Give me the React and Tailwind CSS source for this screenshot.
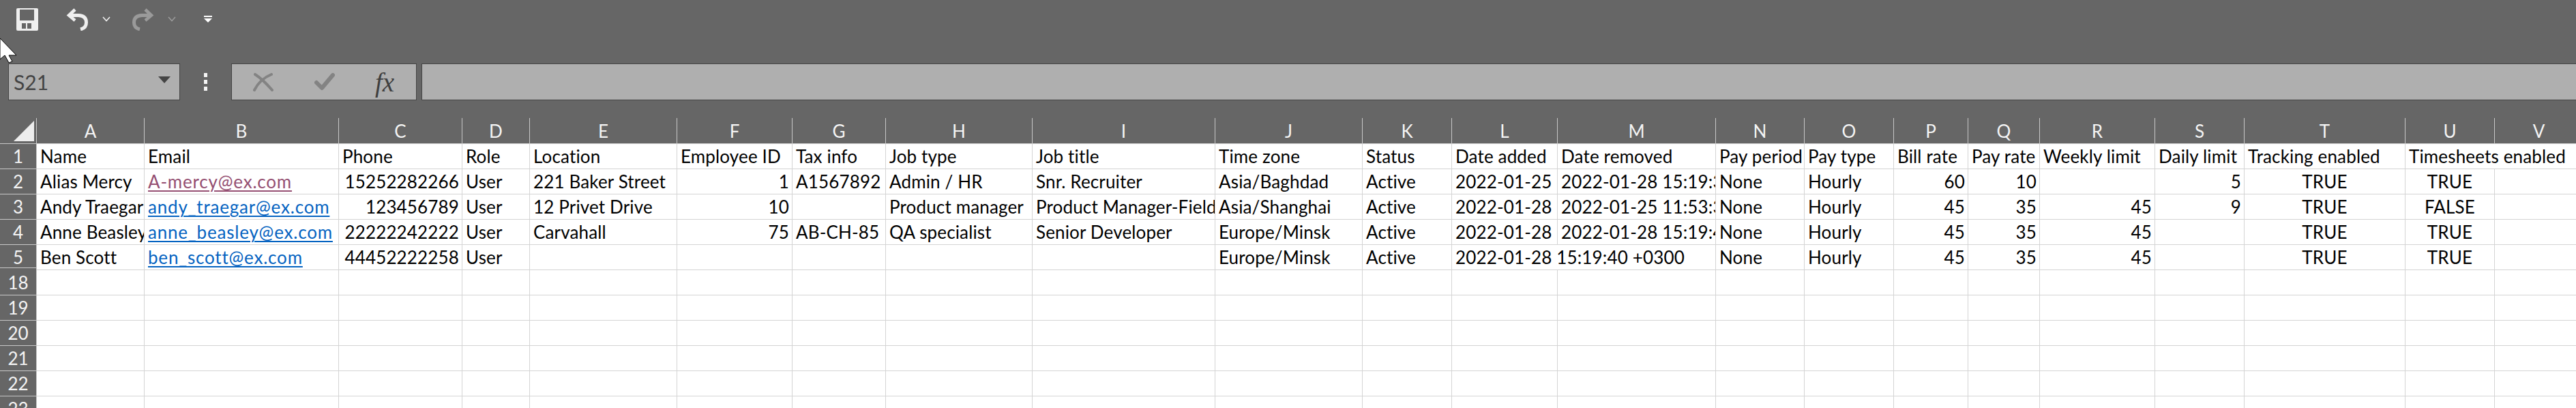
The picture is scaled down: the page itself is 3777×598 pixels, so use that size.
const GRID = "grid grid-cols-[54px_158px_285px_181px_99px_216px_169px_137px_215px_268px_216px_131px_155px_232px_130px_131px_109px_105px_169px_131px_236px_131px_130px]";

const COLUMNS = "ABCDEFGHIJKLMNOPQRSTUV".split("");
const RIGHT = ["C", "F", "P", "Q", "R", "S"];
const CENTER = ["T", "U"];

// "" is an empty cell, null is a cell covered by the text of its left neighbour
const ROWS = [
  { id: 1, cells: ["Name", "Email", "Phone", "Role", "Location", "Employee ID", "Tax info", "Job type", "Job title", "Time zone", "Status", "Date added", "Date removed", "Pay period", "Pay type", "Bill rate", "Pay rate", "Weekly limit", "Daily limit", "Tracking enabled", "Timesheets enabled", null] },
  { id: 2, cells: ["Alias Mercy", "A-mercy@ex.com", "15252282266", "User", "221 Baker Street", "1", "A1567892", "Admin / HR", "Snr. Recruiter", "Asia/Baghdad", "Active", "2022-01-25 11:53:36 +0300", "2022-01-28 15:19:36 +0300", "None", "Hourly", "60", "10", "", "5", "TRUE", "TRUE", ""] },
  { id: 3, cells: ["Andy Traegar", "andy_traegar@ex.com", "123456789", "User", "12 Privet Drive", "10", "", "Product manager", "Product Manager-Field", "Asia/Shanghai", "Active", "2022-01-28 15:19:38 +0300", "2022-01-25 11:53:36 +0300", "None", "Hourly", "45", "35", "45", "9", "TRUE", "FALSE", ""] },
  { id: 4, cells: ["Anne Beasley", "anne_beasley@ex.com", "22222242222", "User", "Carvahall", "75", "AB-CH-85", "QA specialist", "Senior Developer", "Europe/Minsk", "Active", "2022-01-28 15:19:39 +0300", "2022-01-28 15:19:40 +0300", "None", "Hourly", "45", "35", "45", "", "TRUE", "TRUE", ""] },
  { id: 5, cells: ["Ben Scott", "ben_scott@ex.com", "44452222258", "User", "", "", "", "", "", "Europe/Minsk", "Active", "2022-01-28 15:19:40 +0300", null, "None", "Hourly", "45", "35", "45", "", "TRUE", "TRUE", ""] },
];
const EMPTY_ROWS = [18, 19, 20, 21, 22, 23];

function SaveIcon() {
  return (
    <svg width="32" height="33" viewBox="0 0 32 33">
      <path fillRule="evenodd" fill="#efefef" d="M2 0H30Q32 0 32 2V31Q32 33 30 33H2Q0 33 0 31V2Q0 0 2 0ZM5 2V18H26V2ZM8 22V30H22V22Z" />
      <rect x="14" y="22" width="2" height="8" fill="#efefef" />
    </svg>
  );
}

function ArrowIcon({ color, flip }) {
  return (
    <svg width="33" height="33" viewBox="0 0 33 33" className={flip ? "-scale-x-100" : ""}>
      <path d="M13 2L4 10.5L13 18" fill="none" stroke={color} strokeWidth="4.5" />
      <path d="M5 10.5H18Q29.5 11 29.5 21Q29.5 29 21 31" fill="none" stroke={color} strokeWidth="5" />
    </svg>
  );
}

function Chevron({ color }) {
  return (
    <svg width="12" height="8" viewBox="0 0 12 8">
      <path d="M1 1L6 6.5L11 1" fill="none" stroke={color} strokeWidth="1.6" />
    </svg>
  );
}

function Toolbar() {
  return (
    <div className="flex h-[93px] items-start pl-[24px] pt-[12px]">
      <SaveIcon />
      <div className="ml-[41px]"><ArrowIcon color="#efefef" /></div>
      <div className="ml-[20px] mt-[12px]"><Chevron color="#efefef" /></div>
      <div className="ml-[31px]"><ArrowIcon color="#9a9a9a" flip /></div>
      <div className="ml-[20px] mt-[12px]"><Chevron color="#9a9a9a" /></div>
      <div className="ml-[41px] mt-[11px]">
        <svg width="12" height="10" viewBox="0 0 12 10">
          <rect x="0" y="0" width="12" height="2" fill="#fff" />
          <path d="M0 4H12L6 10Z" fill="#fff" />
        </svg>
      </div>
    </div>
  );
}

function FormulaBar() {
  return (
    <div className="flex h-[54px] pl-[12px]">
      <div className="flex w-[252px] items-center justify-between border border-[#444444] bg-[#afafaf] pl-[7px] pr-[13px]">
        <span className="text-[30px] leading-none text-[#444444]">S21</span>
        <svg width="18" height="10" viewBox="0 0 18 10" className="mb-[6px]">
          <path d="M0 0H18L9 10Z" fill="#444444" />
        </svg>
      </div>
      <div className="flex w-[75px] flex-col items-center justify-center gap-[4px] pr-[1px]">
        <span className="h-[6px] w-[5px] bg-[#f5f5f5]" />
        <span className="h-[6px] w-[5px] bg-[#f5f5f5]" />
        <span className="h-[6px] w-[5px] bg-[#f5f5f5]" />
      </div>
      <div className="flex w-[272px] items-center border border-[#444444] bg-[#afafaf] pl-[31px]">
        <svg width="30" height="27" viewBox="0 0 30 27" className="mr-[60px]">
          <path d="M3 2Q14 9 28 25M27 2Q10 9 2 25" fill="none" stroke="#838383" strokeWidth="4" strokeLinecap="round" />
        </svg>
        <svg width="30" height="26" viewBox="0 0 30 26">
          <path d="M3 14L11 22L27 3" fill="none" stroke="#838383" strokeWidth="6" strokeLinecap="round" strokeLinejoin="round" />
        </svg>
        <span className="ml-[59px] font-['Liberation_Serif',serif] text-[39px] italic leading-none text-[#3f3f3f]">fx</span>
      </div>
      <div className="ml-[7px] flex-1 border-y border-l border-[#444444] bg-[#afafaf]" />
    </div>
  );
}

function ColumnHeader() {
  return (
    <div className={`${GRID} mt-[26px] h-[38px] border-b border-[#c8c8c8]`}>
      <div className="relative border-r border-[#c8c8c8]">
        <svg width="30" height="30" viewBox="0 0 30 30" className="absolute left-[20px] top-[4px]">
          <path d="M30 0V30H0Z" fill="#ededed" />
        </svg>
      </div>
      {COLUMNS.map((col) => (
        <div key={col} className="flex items-center justify-center border-r border-[#c8c8c8] text-[26px] leading-[36px] text-[#f4f4f4]">{col}</div>
      ))}
    </div>
  );
}

function RowHeader({ id }) {
  return (
    <div className="relative flex h-[37px] items-center justify-center border-r border-b border-[#c8c8c8] bg-[#666666] text-[26px] leading-[36px] text-[#f4f4f4]">
      {id}
      {id === 5 ? <span className="absolute inset-x-0 bottom-[-2px] h-[3px] bg-[#666666]" /> : null}
      {id === 5 ? <span className="absolute inset-x-0 bottom-[2px] h-px bg-[#c8c8c8]" /> : null}
    </div>
  );
}

function Cell({ value, col, rowId, span }) {
  const isData = rowId > 1;
  const isRight = isData && RIGHT.includes(col);
  const isCenter = isData && CENTER.includes(col);
  const isLink = isData && col === "B";
  return (
    <div className={`h-[37px] overflow-hidden whitespace-nowrap border-r border-b border-[#d4d4d4] bg-white text-[26px] leading-[36px] tracking-[0.15px] text-black ${span ? "col-span-2" : ""} ${isRight ? "pr-[4px] text-right" : isCenter ? "text-center" : "pl-[5px]"}`}>
      {isLink ? (
        <span className={`underline decoration-2 underline-offset-[3px] tracking-[0.8px] ${rowId === 2 ? "text-[#954f72]" : "text-[#0563c1]"}`}>{value}</span>
      ) : value}
    </div>
  );
}

export default function App() {
  return (
    <div className="h-screen overflow-hidden bg-[#666666] font-['Lato',sans-serif]">
      <div className="w-[3788px]">
        <Toolbar />
        <FormulaBar />
        <ColumnHeader />
        {ROWS.map((row) => (
          <div key={row.id} className={GRID}>
            <RowHeader id={row.id} />
            {row.cells.map((value, i) => value === null ? null : (
              <Cell key={COLUMNS[i]} value={value} col={COLUMNS[i]} rowId={row.id} span={row.cells[i + 1] === null} />
            ))}
          </div>
        ))}
        {EMPTY_ROWS.map((id) => (
          <div key={id} className={GRID}>
            <RowHeader id={id} />
            {COLUMNS.map((col) => <Cell key={col} value="" col={col} rowId={id} />)}
          </div>
        ))}
      </div>
      {/* mouse pointer lying over the toolbar */}
      <svg width="26" height="38" viewBox="0 0 26 38" className="absolute left-0 top-[55px]">
        <path d="M0 1L24 26H13L18 35L13 37L7 26L0 32Z" fill="#fff" stroke="#000" strokeWidth="1" />
      </svg>
    </div>
  );
}
